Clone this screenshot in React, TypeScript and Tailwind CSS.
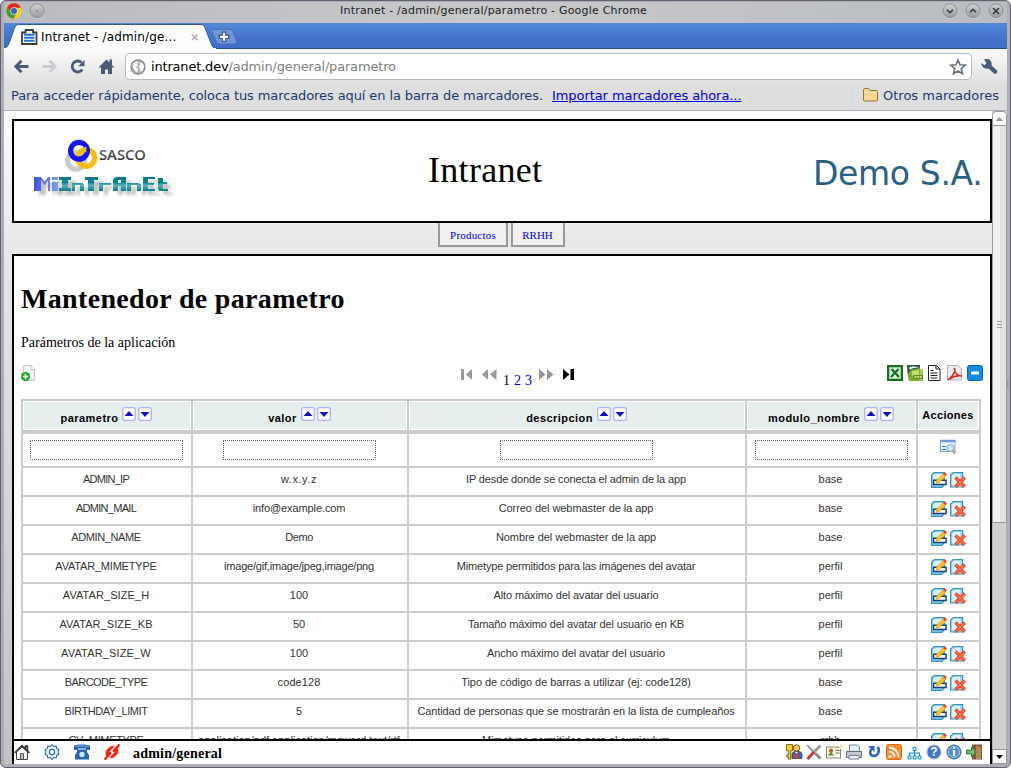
import React from 'react';

type Cell = [text: string, tracking: string];

const rows: Cell[][] = [
  [['ADMIN_IP', 'tracking-[-0.75px]'], ['w.x.y.z', 'tracking-[0.55px]'], ['IP desde donde se conecta el admin de la app', 'tracking-[-0.14px]'], ['base', '']],
  [['ADMIN_MAIL', 'tracking-[-0.7px]'], ['info@example.com', 'tracking-[-0.1px]'], ['Correo del webmaster de la app', 'tracking-[-0.06px]'], ['base', '']],
  [['ADMIN_NAME', 'tracking-[-0.4px]'], ['Demo', 'tracking-[-0.4px]'], ['Nombre del webmaster de la app', 'tracking-[-0.06px]'], ['base', '']],
  [['AVATAR_MIMETYPE', 'tracking-[-0.2px]'], ['image/gif,image/jpeg,image/png', 'tracking-[-0.2px]'], ['Mimetype permitidos para las imágenes del avatar', 'tracking-[-0.15px]'], ['perfil', '']],
  [['AVATAR_SIZE_H', 'tracking-[0.08px]'], ['100', ''], ['Alto máximo del avatar del usuario', 'tracking-[-0.11px]'], ['perfil', '']],
  [['AVATAR_SIZE_KB', 'tracking-[0.08px]'], ['50', ''], ['Tamaño máximo del avatar del usuario en KB', 'tracking-[-0.14px]'], ['perfil', '']],
  [['AVATAR_SIZE_W', 'tracking-[0.15px]'], ['100', ''], ['Ancho máximo del avatar del usuario', 'tracking-[-0.09px]'], ['perfil', '']],
  [['BARCODE_TYPE', 'tracking-[-0.55px]'], ['code128', 'tracking-[0.08px]'], ['Tipo de código de barras a utilizar (ej: code128)', 'tracking-[-0.06px]'], ['base', '']],
  [['BIRTHDAY_LIMIT', 'tracking-[-0.42px]'], ['5', ''], ['Cantidad de personas que se mostrarán en la lista de cumpleaños', 'tracking-[-0.1px]'], ['base', '']],
  [['CV_MIMETYPE', 'tracking-[-0.35px]'], ['application/pdf,application/msword,text/rtf', ''], ['Mimetype permitidos para el curriculum', 'tracking-[-0.1px]'], ['rrhh', '']],
];

const COLS = 'grid grid-cols-[170px_216px_338px_171px_63px]';

function ChromeLogo() {
  return (
    <svg className="h-4 w-4" viewBox="0 0 16 16">
      <circle cx="8" cy="8" r="7.7" fill="#f7cf1c" />
      <path d="M1.200 4.400A7.700 7.700 0 0 1 15 4.800L8 4.800 5 9z" fill="#dc2a1c" />
      <path d="M1.200 4.400A7.700 7.700 0 0 0 7.500 15.700L10.500 10 5 9z" fill="#3f9b3c" />
      <circle cx="8" cy="8" r="3.700" fill="#dfe7f2" />
      <circle cx="8" cy="8" r="3" fill="#2d69bb" />
    </svg>
  );
}

function WinButton({ kind }: { kind: 'dot' | 'down' | 'up' | 'close' }) {
  return (
    <svg className="h-4 w-4" viewBox="0 0 16 16">
      <defs>
        <linearGradient id={'wb' + kind} x1="0" y1="0" x2="0" y2="1">
          <stop offset="0" stopColor="#d2d3d5" />
          <stop offset="1" stopColor="#96989c" />
        </linearGradient>
      </defs>
      <circle cx="8" cy="8.300" r="7.400" fill="#dfe0e2" />
      <circle cx="8" cy="7.800" r="7" fill={'url(#wb' + kind + ')'} stroke="#7d7f84" strokeWidth="0.800" />
      {kind === 'dot' && <circle cx="8" cy="8" r="0.700" fill="#555" />}
      {kind === 'down' && <path d="M5 6.700l3 3 3-3" fill="none" stroke="#383b42" strokeWidth="1.600" />}
      {kind === 'up' && <path d="M5 9.300l3-3 3 3" fill="none" stroke="#383b42" strokeWidth="1.600" />}
      {kind === 'close' && <path d="M5 5l6 6M11 5l-6 6" fill="none" stroke="#383b42" strokeWidth="1.600" />}
    </svg>
  );
}

function TitleBar() {
  return (
    <div className="flex h-[21px] items-start bg-[linear-gradient(90deg,#b9bbbf,#c8c9cb_50%,#b9bcc0)] pt-px">
      <div className="ml-[2px] flex w-[200px] gap-[7px]">
        <ChromeLogo />
        <WinButton kind="dot" />
      </div>
      <div className="flex-1 pl-[134px] font-['DejaVu_Sans',sans-serif] text-[11px] leading-[16px] tracking-[0.21px] text-[#1c1c1c]">
        Intranet - /admin/general/parametro - Google Chrome
      </div>
      <div className="mr-[3px] flex gap-[7px]">
        <WinButton kind="down" />
        <WinButton kind="up" />
        <WinButton kind="close" />
      </div>
    </div>
  );
}

function TabStrip() {
  return (
    <div className="relative h-[26px] bg-[linear-gradient(#5388d9,#4273ca_60%,#3f6ec6)]">
      <svg className="absolute top-0 left-0 h-[26px] w-[1003px]" viewBox="0 0 1003 26">
        <path d="M0 25.500H1003" stroke="#2b508e" />
        <path d="M0 26V25c3 0 4-2 6-7l4-12C11.500 2.500 12.500 1.500 16 1.500H196c3 0 4 1 5.500 4.500l5 13c2 5 3 6.500 6 6.500V26z" fill="#fdfdfd" stroke="#31599f" />
        <path d="M0 25.500H212" stroke="#fbfbfb" />
        <path d="M209.500 6.500h16c2 0 3 1 4 3.500l2.500 7c1 3 0 4-2 4h-14c-2 0-3-1-4-3l-4-9c-.8-2-.5-2.500 1.500-2.500z" fill="#7095d7" stroke="#4a72b9" />
        <path d="M220 8.500v10.500M214.500 13.800h11" stroke="#38598f" strokeWidth="4.400" />
        <path d="M220 9.800v8M216 13.800h8" stroke="#fff" strokeWidth="2.200" />
        <path d="M188 11.500l5.500 5.500M193.500 11.500L188 17" stroke="#aaa" strokeWidth="1.600" />
        <path d="M18 9.500h3.500V7h7.500v2.500h3.500V21H18z" fill="#fff" stroke="#3c3c3c" strokeWidth="1.800" />
        <path d="M20 11.800h10.500M20 14.800h10.500M20 17.800h10.500" stroke="#2271e0" strokeWidth="1.900" />
      </svg>
      <div className="pt-[6px] pl-[37px] font-['DejaVu_Sans',sans-serif] text-[12px] leading-[16px] tracking-[0.15px] text-black">
        <span className="relative">Intranet - /admin/ge...</span>
      </div>
    </div>
  );
}

function Toolbar() {
  return (
    <div className="flex h-[62px] flex-col bg-[linear-gradient(#fbfbfb,#dedede_60%,#dedede)]">
      <div className="flex h-[35px] items-center">
        <svg className="h-[35px] w-[121px] shrink-0" viewBox="0 0 121 35">
          <g fill="none" strokeWidth="2.800">
            <path d="M24.500 17.500H12M17.500 11.800l-5.700 5.700 5.700 5.700" stroke="#4b5a78" />
            <path d="M38.500 17.500h12.500M45.500 11.800l5.700 5.700-5.700 5.700" stroke="#c9ccd2" />
            <path d="M77.500 13.500a5.500 5.500 0 1 0 .8 7" stroke="#4b5a78" />
          </g>
          <path d="M80.500 11v6.300h-6.300z" fill="#4b5a78" />
          <path d="M94.500 18.500L102.500 10.500l3 3v-3h2.500v5.500l2.500 2.500H108V25h-4v-4.500h-3V25h-4v-6.500z" fill="#4b5a78" />
        </svg>
        <div className="flex h-[27px] w-[847px] items-center rounded-[5px] border border-[#b8b8ba] bg-white">
          <svg className="ml-[4px] h-4 w-4" viewBox="0 0 16 16">
            <circle cx="8" cy="8" r="7" fill="#b4b5b8" stroke="#85878b" strokeWidth="1.300" />
            <path d="M3 4.500l3-2.500 2.500 1-1.500 2L8 7 5 8l3 2-1 3.500-2-2-2-3zM10 2.500l3 2.500 1 3-1.500 4-2 .5-.5-3L9 8l1.500-2.500z" fill="#fff" />
          </svg>
          <div className="ml-[5px] flex-1 font-['DejaVu_Sans',sans-serif] text-[13px] leading-[18px] tracking-[-0.18px] text-[#808080]">
            <span className="text-black">intranet.dev</span>/admin/general/parametro
          </div>
          <svg className="mr-[4px] h-[18px] w-[18px]" viewBox="0 0 18 18">
            <path d="M9 2l2 4.800 5.200.4-4 3.400 1.300 5.100L9 13l-4.500 2.700 1.300-5.100-4-3.400L7 6.800z" fill="#fff" stroke="#69748a" strokeWidth="1.600" />
          </svg>
        </div>
        <svg className="ml-[8px] h-[18px] w-[18px]" viewBox="0 0 18 18">
          <path d="M6.500 5.200L4 1.500c4.500-1.500 8.500 1 7.500 6L17 12.500c1.200 1.500-1.300 4.300-3 3L8.500 10.500C5 11.500 1.500 9 1 5l3.500 2.200z" fill="#4b5a78" />
        </svg>
      </div>
      <div className="flex h-[27px] items-center border-b border-[#abadbc] pb-[2px] font-['DejaVu_Sans',sans-serif] text-[13px] leading-[18px] text-[#1c3a6e]">
        <span className="w-[541px] shrink-0 pl-[7px] tracking-[-0.1px] whitespace-nowrap">Para acceder rápidamente, coloca tus marcadores aquí en la barra de marcadores.</span>
        <span className="ml-[7px] w-[296px] shrink-0 tracking-[-0.07px] whitespace-nowrap text-[#0000e6] underline">Importar marcadores ahora...</span>
        <svg className="h-[22px] w-[34px] shrink-0" viewBox="0 0 34 22">
          <path d="M4.500 0v22" stroke="#c9d6f5" />
          <path d="M15.500 5c0-1 .5-1.500 1.500-1.500h3.500l1.500 2h6.500c.8 0 1 .5 1 1v8.500c0 .7-.3 1-1 1h-12c-.7 0-1-.3-1-1z" fill="#fbd58d" stroke="#97703a" />
          <path d="M16.500 7.500h12" stroke="#fff0c8" />
        </svg>
        <span className="ml-[1px] whitespace-nowrap">Otros marcadores</span>
      </div>
    </div>
  );
}

function SascoLogo() {
  return (
    <svg className="mt-[6px] ml-[17px] h-[82px] w-[145px]" viewBox="0 0 145 82">
      <defs>
        <linearGradient id="sasco" x1="0" y1="0" x2="0" y2="1">
          <stop offset="0" stopColor="#777" />
          <stop offset="1" stopColor="#222" />
        </linearGradient>
        <linearGradient id="teal" gradientUnits="userSpaceOnUse" x1="0" y1="50" x2="0" y2="64">
          <stop offset="0" stopColor="#067b87" />
          <stop offset="0.400" stopColor="#0e8592" />
          <stop offset="0.600" stopColor="#5cb0b8" />
          <stop offset="1" stopColor="#067b87" />
        </linearGradient>
        <linearGradient id="blue" gradientUnits="userSpaceOnUse" x1="3" y1="0" x2="27" y2="0">
          <stop offset="0" stopColor="#3d53ea" />
          <stop offset="0.250" stopColor="#4b63ee" />
          <stop offset="1" stopColor="#7f9bf2" />
        </linearGradient>
        <filter id="soft" x="-10%" y="-50%" width="120%" height="220%">
          <feGaussianBlur stdDeviation="1.700" />
        </filter>
      </defs>
      <g fill="none" strokeWidth="5.200">
        <circle cx="45" cy="33.700" r="8.400" stroke="#cbcccd" />
        <circle cx="55.300" cy="31" r="8.400" stroke="#fdbd0b" />
        <circle cx="48" cy="23.700" r="8.400" stroke="#1616ee" />
        <path d="M47.100 29.200a8.400 8.400 0 0 1 8.200-6.600" stroke="#fdbd0b" />
        <path d="M48 32.100a8.400 8.400 0 0 0 5.900-2.400" stroke="#1616ee" />
      </g>
      <text x="68" y="33" textLength="47" lengthAdjust="spacingAndGlyphs" fontFamily="Open Sans" fontWeight="600" fontSize="15" fill="url(#sasco)">SASCO</text>
      <g transform="translate(5 4)" opacity="0.450" filter="url(#soft)">
        <Wordmark blue="#777" teal="#777" />
      </g>
      <Wordmark blue="url(#blue)" teal="url(#teal)" />
    </svg>
  );
}

function Wordmark({ blue, teal }: { blue: string; teal: string }) {
  return (
    <g>
      <path d="M3 50h5v14H3zM8 50h2l3.500 5 3.500-5h2v14h-2V53.500L13.500 58 10 53v11H8zM21 50h6v3h-6zM21 55h6v9h-6z" fill={blue} />
      <path d="M28 50h12v3h-3v8h3v3H28v-3h3v-8h-3zM41 56h9c2 0 3 1 3 3v5h-4v-6h-5v6h-3zM54 50h13v3h-4v11h-6V53h-3zM68 56h12v2h-8v6h-4zM82 64V54c0-3 2-4 5-4h8v14h-5v-5h-3v5zM87 53v3h3v-3zM96 56h10c3 0 4 1 4 3v5h-4v-6h-6v6h-4zM112 50h12v2h-7v4h6v2h-6v4h7v2h-12zM127 51h5v4h4v2h-4v5h5v2h-7c-2 0-3-1-3-3z" fill={teal} fillRule="evenodd" />
    </g>
  );
}

function SortButtons() {
  return (
    <svg className="ml-[4px] inline-block h-[14px] w-[30px] shrink-0" viewBox="0 0 30 14">
      <rect x="0.700" y="0.700" width="12.600" height="12.600" rx="2" fill="#fff" stroke="#a9b4ff" strokeWidth="1.300" />
      <rect x="16.700" y="0.700" width="12.600" height="12.600" rx="2" fill="#fff" stroke="#a9b4ff" strokeWidth="1.300" />
      <path d="M2.500 9h9L7 4zM18.500 5h9L23 10z" fill="#1010c8" />
    </svg>
  );
}

function EditIcon() {
  return (
    <svg className="h-4 w-4" viewBox="0 0 16 16">
      <path d="M.6 3L3.300.6H13.300V12.500L11 15.400H.6z" fill="#8fd0ec" stroke="#2f96b7" strokeWidth="1.200" />
      <path d="M2 3.500l2-1.700h7V12H2z" fill="#d3f0fb" />
      <path d="M2.600 8.300h12.500v4.200H2.600z" fill="#fff" stroke="#163f78" strokeWidth="1.400" />
      <path d="M5.500 8.500L5 11.200l3-.7L14.500 4.500 12 2z" fill="#fdc21a" stroke="#d39212" strokeWidth="0.600" />
      <path d="M12.300 1.800L14 .2 16 2.300 14.600 4.200z" fill="#f3442d" />
    </svg>
  );
}

function DeleteIcon() {
  return (
    <svg className="h-4 w-4" viewBox="0 0 16 16">
      <path d="M.6 3L3.300.6H12.600V15H.6z" fill="#a4daf5" stroke="#3795c1" strokeWidth="1.200" />
      <path d="M2 3.500l2-1.700h6V13H2z" fill="#dcf2fd" />
      <path d="M5.500 5.500l9.300 9.300M14.800 5.500l-9.300 9.300" stroke="#e8411f" strokeWidth="3.400" />
      <path d="M6 6l8.300 8.300M14.300 6L6 14.300" stroke="#ff7a52" strokeWidth="1.300" />
    </svg>
  );
}

function SearchIcon() {
  return (
    <svg className="h-4 w-4" viewBox="0 0 16 16">
      <rect x="0.500" y="1.500" width="14.500" height="11" fill="#e6f0ff" stroke="#86aae0" />
      <path d="M0 2h15.500" stroke="#6f9ade" strokeWidth="2.500" />
      <path d="M2 7.500h4M2 10.500h4" stroke="#3f68b3" strokeWidth="1.200" />
      <circle cx="10.300" cy="9" r="3.500" fill="#cfe5fa" stroke="#8aa9d2" />
      <path d="M13 12l2.300 2.500" stroke="#cb934f" strokeWidth="2.200" />
    </svg>
  );
}

function Pager() {
  return (
    <div className="flex h-[22px] items-start font-['Liberation_Serif',serif] text-[14px] leading-[16px] text-[#0000ee]">
      <svg className="mt-[4px] h-[12px] w-[37px]" viewBox="0 0 37 12">
        <path d="M0 0h3v11H0zM11 0v11L5 5.500zM27 0v11L21 5.500zM35.500 0v11L29 5.500z" fill="#999" />
      </svg>
      <div className="mt-[8px] ml-[5px] flex gap-[4px]">
        <span className="text-black">1</span><span>2</span><span>3</span>
      </div>
      <svg className="mt-[4px] ml-[7px] h-[12px] w-[37px]" viewBox="0 0 37 12">
        <path d="M0 0v11L6.500 5.500zM8 0v11L14.500 5.500z" fill="#999" />
        <path d="M24 0v11L30.500 5.500zM31.500 0h3.500v11H31.500z" fill="#000" />
      </svg>
    </div>
  );
}

function ExportIcons() {
  return (
    <svg className="h-4 w-[96px]" viewBox="0 0 96 16">
      <rect x="1" y="1" width="14" height="14" fill="#fff" stroke="#137320" strokeWidth="2" />
      <rect x="2.500" y="2.500" width="11" height="11" fill="#e5f6e4" stroke="#4ba34d" strokeDasharray="1 1" />
      <path d="M4.500 4l7.500 8M11.500 4L4 12" stroke="#167524" strokeWidth="2.500" />
      <path d="M20 0h13v16H22c-1-3-2-8-2-16z" fill="#7fae2e" />
      <path d="M33 4l3 1v11h-4z" fill="#a3c84a" />
      <path d="M20 0h13v3L24 5l-3 4z" fill="#2b5a50" />
      <path d="M22 2.500c3-1.500 7-1 10 .5-4-.5-7 0-9 2z" fill="#f3f7e8" />
      <path d="M24.500 6l7.500-1v5l-6.500 1z" fill="#c3df6d" />
      <path d="M26.500 12h9.500" stroke="#5d8a18" strokeWidth="4" />
      <path d="M27.500 12h7.500" stroke="#e7f3cd" strokeWidth="1.400" strokeDasharray="1.800 0.800" />
      <path d="M41.500.5h8l3.500 3.500v11.500H41.500zM49 .5V4h4M43.500 5.500h3M43.500 8h7M43.500 10.500h7M43.500 13h7" fill="#fff" stroke="#222" />
      <path d="M60.500.5h10.500L74.500 4v11H60.500z" fill="#ececec" stroke="#b0b0b0" />
      <path d="M67 3c2.500 3-1 8-6 12M67.500 3c0 5 3 8 7.500 8-4-.5-8 0-12 3" fill="none" stroke="#dc2222" strokeWidth="1.500" />
      <rect x="80.500" y="0.500" width="15" height="15" rx="2" fill="#118ae0" stroke="#0763b5" />
      <rect x="84" y="6.500" width="8" height="3" fill="#fff" />
    </svg>
  );
}

function Table() {
  return (
    <div className="w-[960px] border-l-2 border-[#ccc] font-['Liberation_Sans',sans-serif] text-[11px] text-[#333]">
      <div className={COLS + ' h-[35px] border-t-2 border-b-4 border-[#ccc] font-bold text-black'}>
        {['parametro', 'valor', 'descripcion', 'modulo_nombre'].map((h) => (
          <div key={h} className="border-r-2 border-[#ccc] p-px">
            <div className="flex h-[27px] justify-center bg-[#e6eeee] pt-[5px] pr-px">
              <span className="mt-[4px] leading-[14px] tracking-[0.45px]">{h}</span>
              <SortButtons />
            </div>
          </div>
        ))}
        <div className="border-r-2 border-[#ccc] p-px">
          <div className="h-[27px] bg-[#e6eeee] pt-[6px] pr-px text-center leading-[14px] tracking-[0.3px]">Acciones</div>
        </div>
      </div>
      <div className={COLS + ' h-[34px] border-b-2 border-[#ccc]'}>
        {[0, 1, 2, 3].map((i) => (
          <div key={i} className="flex justify-center border-r-2 border-[#ccc] pt-[6px] pr-px">
            <input className="h-[20px] w-[153px] border border-dotted border-[#666] bg-white outline-none" />
          </div>
        ))}
        <div className="flex justify-center border-r-2 border-[#ccc] pt-[5px] pr-px"><SearchIcon /></div>
      </div>
      {rows.map((r) => (
        <div key={r[0][0]} className={COLS + ' h-[29px] border-b-2 border-[#ccc]'}>
          {r.map(([text, tracking], i) => (
            <div key={i} className={'border-r-2 border-[#ccc] pt-[4px] pr-[2px] text-center leading-[14px] whitespace-nowrap ' + tracking}>{text}</div>
          ))}
          <div className="flex gap-[3px] border-r-2 border-[#ccc] pt-[4px] pl-[13px]"><EditIcon /><DeleteIcon /></div>
        </div>
      ))}
    </div>
  );
}

function Footer() {
  return (
    <div className="flex h-[25px] w-[976px] shrink-0 items-start border-t-2 border-black bg-white">
      <svg className="mt-[3px] h-4 w-[106px]" viewBox="0 0 106 16">
        <path d="M2.500 8v7.500h11V8L8 3z" fill="#fff" stroke="#444" />
        <path d="M.5 9L8 1.500 15.500 9M11.500 5V2h2v5" fill="none" stroke="#333" strokeWidth="1.500" />
        <path d="M6.500 15V9.500h3V15" fill="#bbb" stroke="#555" />
        <path d="M38 .8l1.800 1.700 2.500-.4.500 2.500 2.200 1L43.900 8l1.100 2.300-2.300 1.100-.4 2.500-2.500-.4L38 15.300l-1.800-1.800-2.500.4-.4-2.500L31 10.300 32.100 8 31 5.700l2.200-1 .5-2.500 2.500.4z" fill="#e5f3ff" stroke="#246fb8" strokeWidth="1.100" />
        <circle cx="38" cy="8" r="2.600" fill="#fff" stroke="#246fb8" strokeWidth="1.200" />
        <path d="M60 1.500c4-1.500 12-1.500 16 0V6h-4V4.500h-8V6h-4zM63 5.500h10V8l2 3v4.500H61V11l2-3z" fill="#2763b4" />
        <circle cx="68" cy="10.500" r="2.700" fill="#c9e4fc" />
        <path d="M61.500 2.800c4-1.200 9-1.200 13 0" fill="none" stroke="#70a2de" strokeWidth="1.200" />
        <g fill="#f8240f" stroke="#f8240f">
          <path d="M90.500 15.500l4-4M101.500 4.500l4-4" fill="none" strokeWidth="2.400" />
          <path d="M92.500 12.500c-2-5 1-9 6-10.500l1.500.5-4.500 5 2 1.500-2.500 3.500zM103.500 3.500c2 5-1 9-6 10.500l-1.500-.5 4.500-5-2-1.500 2.500-3.500z" strokeWidth="0.600" />
        </g>
        <path d="M96.500 7.500l2.500-3M97 11.500l2.500-3" stroke="#fff" strokeWidth="1" />
      </svg>
      <span className="mt-[4px] ml-[13px] flex-1 font-['Liberation_Serif',serif] text-[14px] leading-[18px] font-bold tracking-[0.22px] text-black">admin/general</span>
      <svg className="mt-[3px] mr-[6px] h-4 w-[198px]" viewBox="0 0 198 16">
        <g stroke="#5c3d12" strokeWidth="0.800">
          <circle cx="10.500" cy="4" r="3.300" fill="#ffcb52" />
          <path d="M6 14.500V9.500c1-3 9-3 10 0v5z" fill="#2a67cf" />
          <path d="M.6.600h6v6H4.800v8.500H2.300V13H.8v-2h1.500V6.600H.6z" fill="#ffd313" />
        </g>
        <path d="M9.500 8h2l1 5-2 2-2-2z" fill="#f13b18" />
        <path d="M9 8l1.500 1.500L12 8z" fill="#fff" />
        <path d="M21 1l13 13.500" stroke="#888" strokeWidth="1.800" />
        <path d="M34.500 1.500l-6 6" stroke="#999" strokeWidth="3" />
        <path d="M21.500 15l6.500-7" stroke="#cf2e2e" strokeWidth="2.600" />
        <path d="M29.500 9.500l5 5" stroke="#8a8a8a" strokeWidth="3" />
        <rect x="40.500" y="3" width="14" height="11" fill="#fffce7" stroke="#88886b" />
        <circle cx="45" cy="6.800" r="2.200" fill="#be6a20" /><path d="M42 11.500c1-3.500 5-3.500 6 0z" fill="#498b31" /><path d="M49.500 6.500h4M49.500 9h4" stroke="#666" />
        <path d="M54.500 0v5M52 2.500h4.500" stroke="#ffe27a" />
        <path d="M63.500 1h8l2 2v5h-10z" fill="#e2f1fc" stroke="#7b8591" />
        <path d="M60.500 7.500h15v6h-15z" fill="#c4c9d0" stroke="#666d77" /><path d="M63 11.500h10V15H63z" fill="#e9f5ff" stroke="#777e88" />
        <path d="M91.500 3c3 3 .5 9-3.500 9S83 8 85.500 5" fill="none" stroke="#2f62b9" strokeWidth="2.600" />
        <path d="M82 2h6.500v6z" fill="#2f62b9" />
        <rect x="100.500" y="0.500" width="15" height="15" rx="2" fill="#f68b30" stroke="#d86a18" />
        <circle cx="104" cy="12.500" r="1.600" fill="#fff" /><path d="M103 7.500a5.500 5.500 0 0 1 5.500 5.500M103 3.500a9.500 9.500 0 0 1 9.500 9.500" fill="none" stroke="#fff" strokeWidth="1.800" />
        <path d="M128.500 6v6M123.500 12V9h10v3" fill="none" stroke="#118cc9" strokeWidth="1.200" />
        <path d="M127 3.500h3v3h-3zM122 12h3v3h-3zM127 12h3v3h-3zM132 12h3v3h-3z" fill="#fff" stroke="#118cc9" />
        <circle cx="148" cy="8" r="7" fill="#3f75c9" stroke="#adb7ca" />
        <text x="148" y="12.300" textAnchor="middle" fontFamily="Liberation Sans" fontSize="12" fontWeight="700" fill="#fff">?</text>
        <circle cx="168" cy="8" r="7" fill="#4b8fcd" stroke="#4a6486" /><circle cx="168" cy="8" r="5.500" fill="none" stroke="#9dd0f1" />
        <text x="168" y="12" textAnchor="middle" fontFamily="Liberation Serif" fontSize="12" fontWeight="700" fill="#fff">i</text>
        <path d="M186 .5h10v15h-10z" fill="#765c3c" /><path d="M190 1.500l5 1.500v12h-5z" fill="#b8894a" />
        <path d="M180.500 6h5V3l5 5-5 5v-3h-5z" fill="#79b76b" stroke="#387c3b" />
      </svg>
    </div>
  );
}

function Scrollbar() {
  return (
    <div className="flex w-[15px] shrink-0 flex-col bg-[#d1d1d1]">
      <div className="flex h-[15px] items-center justify-center rounded-t-[4px] border border-[#999] bg-[#fafafa]">
        <svg className="h-[4px] w-[7px]" viewBox="0 0 7 4"><path d="M0 4h7L3.500 0z" fill="#999" /></svg>
      </div>
      <div className="flex h-[397px] flex-col items-center justify-center gap-[2px] border border-t-0 border-[#999] bg-[linear-gradient(90deg,#f1f1f1_50%,#e2e2e2_50%)]">
        <i className="h-px w-[5px] bg-[#999]" /><i className="h-px w-[5px] bg-[#999]" /><i className="h-px w-[5px] bg-[#999]" />
      </div>
      <div className="flex-1 border-x border-[#b5b5b5]" />
      <div className="flex h-[15px] items-center justify-center border border-[#999] bg-[#fafafa]">
        <svg className="h-[4px] w-[7px]" viewBox="0 0 7 4"><path d="M0 0h7L3.500 4z" fill="#000" /></svg>
      </div>
    </div>
  );
}

export default function App() {
  return (
    <div className="relative flex h-[768px] w-[1011px] flex-col overflow-hidden rounded-[6px] border border-[#62626f] bg-[#adadb7] px-[3px] pt-px">
      <TitleBar />
      <TabStrip />
      <Toolbar />
      <div className="flex h-[653px] shrink-0">
        <div className="flex w-[988px] flex-col overflow-hidden bg-[linear-gradient(#fdfdfd,#ececec_110px,#e6e6e6_150px,#c2c2c2)] pt-[8px] pl-[8px] font-['Liberation_Serif',serif] text-black">
          <header className="flex h-[104px] w-[980px] shrink-0 items-start border-2 border-black bg-white">
            <div className="w-[400px]"><SascoLogo /></div>
            <div className="mt-[27px] ml-[14px] w-[385px] text-[36px] leading-[44px] tracking-[0.3px]">Intranet</div>
            <div className="mt-[32px] font-['DejaVu_Sans',sans-serif] text-[33px] leading-[42px] tracking-[-0.35px] whitespace-nowrap text-[#286184]">Demo S.A.</div>
          </header>
          <nav className="flex h-[31px] shrink-0 items-start gap-[3px] pl-[426px] text-[11px] leading-[14px] text-[#0000ee]">
            <a className="h-[24px] w-[70px] border-2 border-t-0 border-[#999] bg-[#f0f0f0] pt-[5px] text-center tracking-[0.2px]">Productos</a>
            <a className="h-[24px] w-[54px] border-2 border-t-0 border-[#999] bg-[#f0f0f0] pt-[5px] pr-px text-center">RRHH</a>
          </nav>
          <main className="flex h-[510px] w-[980px] shrink-0 flex-col border-x-2 border-t-2 border-black bg-white">
            <div className="h-[483px] overflow-hidden pl-[7px]">
              <h1 className="mt-[26px] text-[28px] leading-[34px] font-bold tracking-[0.33px]">Mantenedor de parametro</h1>
              <p className="mt-[18px] text-[14px] leading-[18px]">Parámetros de la aplicación</p>
              <div className="mt-[13px] flex h-[22px] w-[962px] items-start">
                <svg className="h-4 w-4" viewBox="0 0 16 16">
                  <path d="M2.500.5h7.500l3.500 4v11h-11z" fill="#f4f4f4" stroke="#c7c7c7" /><path d="M10 .5v4h3.500" fill="#fff" stroke="#c7c7c7" />
                  <circle cx="4.500" cy="11.500" r="4.500" fill="#17a817" /><path d="M4.500 8.800v5.400M1.800 11.500h5.400" stroke="#fff" strokeWidth="1.500" />
                </svg>
                <div className="w-[850px] pl-[424px]"><Pager /></div>
                <ExportIcons />
              </div>
              <div className="mt-[12px]"><Table /></div>
            </div>
            <Footer />
          </main>
        </div>
        <Scrollbar />
      </div>
      <svg className="absolute top-[379px] right-0 h-[9px] w-[3px]" viewBox="0 0 3 9">
        <path d="M0 1h1.500M0 4h1.500M0 7h1.500" stroke="#70727f" />
      </svg>
    </div>
  );
}
